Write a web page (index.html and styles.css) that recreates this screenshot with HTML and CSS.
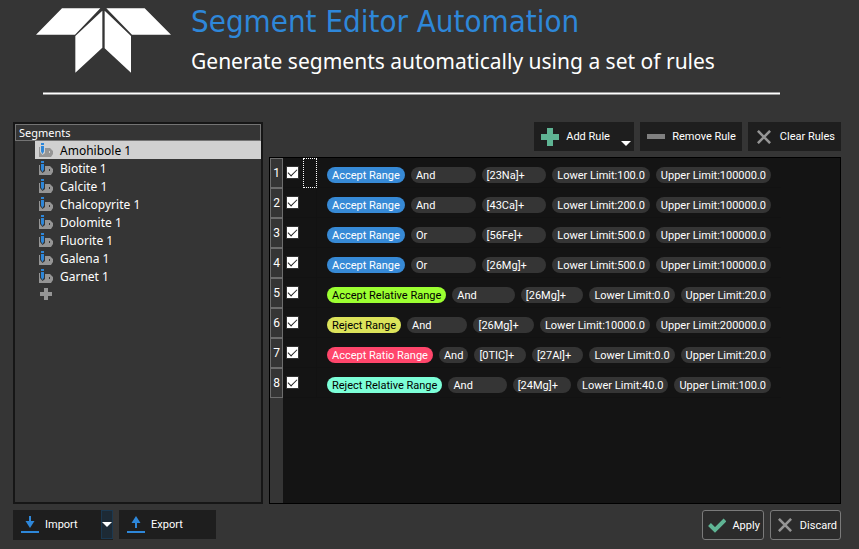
FILE: index.html
```html
<!DOCTYPE html>
<html lang="en">
<head>
  <meta charset="UTF-8" />
  <meta name="viewport" content="width=device-width, initial-scale=1.0"/>
  <title>Segment Editor Automation</title>
  <link rel="stylesheet" href="styles.css">
</head>
<body>
  <!-- shared icons -->
  <svg class="sprite" aria-hidden="true">
    <symbol id="icon-segment" viewBox="0 0 14 14">
      <path class="tag" d="M0 4h1v5l2.500 3L6 10V5h5l3 3v3l-2 3H0zM10 8v2h1V8z"/>
      <path class="pen" d="M2 0h3v2H2zM2 3h3v5.500L3.500 11 2 8.500z"/>
    </symbol>
    <symbol id="icon-plus" viewBox="0 0 18 18">
      <path d="M6 0h6v6h6v6h-6v6H6v-6H0V6h6z"/>
    </symbol>
    <symbol id="icon-cross" viewBox="0 0 16 16">
      <path d="M1 1l14 14M15 1L1 15" fill="none" stroke="#959595" stroke-width="3"/>
    </symbol>
  </svg>

  <header class="header">
    <div class="brand">
      <svg class="logo" viewBox="109 24 405 195" role="img" aria-label="Logo">
        <path d="M187 25H302L226 104H109zM320 25H435L514 104H397zM308 32V143L227 218V108zM315 32V145L394 218V108z" fill="#fff"/>
      </svg>
      <div class="titles">
        <h1>Segment Editor Automation</h1>
        <p>Generate segments automatically using a set of rules</p>
      </div>
    </div>
    <hr class="rule-line">
  </header>

  <main class="editor">
    <section class="segments">
      <h2>Segments</h2>
      <ul class="segment-list">
        <li class="selected"><svg><use href="#icon-segment"/></svg>Amohibole 1</li>
        <li><svg><use href="#icon-segment"/></svg>Biotite 1</li>
        <li><svg><use href="#icon-segment"/></svg>Calcite 1</li>
        <li><svg><use href="#icon-segment"/></svg>Chalcopyrite 1</li>
        <li><svg><use href="#icon-segment"/></svg>Dolomite 1</li>
        <li><svg><use href="#icon-segment"/></svg>Fluorite 1</li>
        <li><svg><use href="#icon-segment"/></svg>Galena 1</li>
        <li><svg><use href="#icon-segment"/></svg>Garnet 1</li>
        <li><button class="add-segment" aria-label="Add segment"><svg><use href="#icon-plus"/></svg></button></li>
      </ul>
    </section>

    <section class="rules">
      <div class="toolbar">
        <button class="btn add-rule">
          <svg class="icon green"><use href="#icon-plus"/></svg>Add Rule
          <span class="arrow"></span>
        </button>
        <button class="btn">
          <svg class="icon" viewBox="0 0 18 18"><path d="M0 6h18v5H0z" fill="#808080"/></svg>Remove Rule
        </button>
        <button class="btn">
          <svg class="icon small"><use href="#icon-cross"/></svg>Clear Rules
        </button>
      </div>

      <div class="table-frame">
        <table class="rule-table">
          <colgroup>
            <col class="col-number"><col class="col-check"><col class="col-spacer"><col>
          </colgroup>
          <tr>
            <th scope="row">1</th>
            <td class="check"><input type="checkbox" aria-label="Rule 1" checked></td>
            <td class="spacer focused"></td>
            <td><div class="pills">
              <span class="pill blue">Accept Range</span><span class="pill grow">And</span><span class="pill grow">[23Na]+</span><span class="pill">Lower Limit:100.0</span><span class="pill">Upper Limit:100000.0</span>
            </div></td>
          </tr>
          <tr>
            <th scope="row">2</th>
            <td class="check"><input type="checkbox" aria-label="Rule 2" checked></td>
            <td class="spacer"></td>
            <td><div class="pills">
              <span class="pill blue">Accept Range</span><span class="pill grow">And</span><span class="pill grow">[43Ca]+</span><span class="pill">Lower Limit:200.0</span><span class="pill">Upper Limit:100000.0</span>
            </div></td>
          </tr>
          <tr>
            <th scope="row">3</th>
            <td class="check"><input type="checkbox" aria-label="Rule 3" checked></td>
            <td class="spacer"></td>
            <td><div class="pills">
              <span class="pill blue">Accept Range</span><span class="pill grow">Or</span><span class="pill grow">[56Fe]+</span><span class="pill">Lower Limit:500.0</span><span class="pill">Upper Limit:100000.0</span>
            </div></td>
          </tr>
          <tr>
            <th scope="row">4</th>
            <td class="check"><input type="checkbox" aria-label="Rule 4" checked></td>
            <td class="spacer"></td>
            <td><div class="pills">
              <span class="pill blue">Accept Range</span><span class="pill grow">Or</span><span class="pill grow">[26Mg]+</span><span class="pill">Lower Limit:500.0</span><span class="pill">Upper Limit:100000.0</span>
            </div></td>
          </tr>
          <tr>
            <th scope="row">5</th>
            <td class="check"><input type="checkbox" aria-label="Rule 5" checked></td>
            <td class="spacer"></td>
            <td><div class="pills">
              <span class="pill lime">Accept Relative Range</span><span class="pill grow">And</span><span class="pill grow">[26Mg]+</span><span class="pill">Lower Limit:0.0</span><span class="pill">Upper Limit:20.0</span>
            </div></td>
          </tr>
          <tr>
            <th scope="row">6</th>
            <td class="check"><input type="checkbox" aria-label="Rule 6" checked></td>
            <td class="spacer"></td>
            <td><div class="pills">
              <span class="pill yellow">Reject Range</span><span class="pill grow">And</span><span class="pill grow">[26Mg]+</span><span class="pill">Lower Limit:10000.0</span><span class="pill">Upper Limit:200000.0</span>
            </div></td>
          </tr>
          <tr>
            <th scope="row">7</th>
            <td class="check"><input type="checkbox" aria-label="Rule 7" checked></td>
            <td class="spacer"></td>
            <td><div class="pills">
              <span class="pill red">Accept Ratio Range</span><span class="pill">And</span><span class="pill grow">[0TIC]+</span><span class="pill grow">[27Al]+</span><span class="pill">Lower Limit:0.0</span><span class="pill">Upper Limit:20.0</span>
            </div></td>
          </tr>
          <tr>
            <th scope="row">8</th>
            <td class="check"><input type="checkbox" aria-label="Rule 8" checked></td>
            <td class="spacer"></td>
            <td><div class="pills">
              <span class="pill aqua">Reject Relative Range</span><span class="pill grow">And</span><span class="pill grow">[24Mg]+</span><span class="pill">Lower Limit:40.0</span><span class="pill">Upper Limit:100.0</span>
            </div></td>
          </tr>
        </table>
      </div>
    </section>
  </main>

  <footer class="footer">
    <div class="split">
      <button class="btn file-btn">
        <svg class="icon" viewBox="0 0 18 18"><path d="M8 0h2v5h3.500L9 12 4.500 5H8zM0 15h18v2H0z" fill="#2e87d9"/></svg>Import
      </button>
      <button class="split-arrow" aria-label="Import options"><span class="arrow"></span></button>
    </div>
    <button class="btn file-btn">
      <svg class="icon" viewBox="0 0 18 18"><path d="M8 12h2V7h3.500L9 0 4.500 7H8zM0 15h18v2H0z" fill="#2e87d9"/></svg>Export
    </button>
    <button class="btn outlined first">
      <svg class="icon" viewBox="0 0 18 18"><path d="M1.500 8.500l5.500 5.500L17 4" fill="none" stroke="#5fb494" stroke-width="4"/></svg>Apply
    </button>
    <button class="btn outlined">
      <svg class="icon small"><use href="#icon-cross"/></svg>Discard
    </button>
  </footer>
</body>
</html>
```
FILE: styles.css
```css
* {
  box-sizing: border-box;
}

body {
  margin: 0;
  min-height: 100vh;
  display: flex;
  flex-direction: column;
  background: #353535;
  color: #fff;
  font-family: Roboto, sans-serif;
  font-size: 11px;
}

.sprite {
  display: none;
}

.header {
  height: 122px;
  padding: 0 79px 0 36px;
}

.brand {
  display: flex;
  gap: 20px;
}

.logo {
  flex: none;
  width: 135px;
  height: 65px;
  margin-top: 8px;
}

.titles {
  white-space: nowrap;
}

h1 {
  margin: 0;
  font-family: "DejaVu Sans Condensed", "DejaVu Sans", sans-serif;
  font-size: 31px;
  line-height: 42px;
  font-weight: normal;
  color: #2e87d9;
}

.titles p {
  margin: 0;
  font-family: "Noto Sans", sans-serif;
  font-size: 21px;
  line-height: 38px;
}

.rule-line {
  height: 3px;
  margin: 12px 0 0 7px;
  border: 1px solid #9a9a9a;
  border-width: 1px 0;
  background: #fff;
}

.editor {
  flex: 1;
  display: flex;
  gap: 6px;
  padding: 0 18px 0 13px;
}

.segments {
  flex: none;
  width: 250px;
  border: 2px solid #161616;
  font-family: "Noto Sans", sans-serif;
  font-size: 12px;
}

.segments h2 {
  margin: 0;
  padding-left: 3px;
  border: 1px solid #747474;
  font-size: 11px;
  line-height: 15px;
  font-weight: normal;
}

.segment-list {
  margin: 0;
  padding: 0 0 0 20px;
  list-style: none;
}

.segment-list li {
  display: flex;
  align-items: center;
  gap: 7px;
  height: 18px;
  padding-left: 4px;
}

.segment-list svg {
  width: 14px;
  height: 14px;
}

.segment-list .selected {
  background: #d0d0d0;
  color: #000;
}

.tag {
  fill: #959595;
  fill-rule: evenodd;
}

.selected .tag {
  fill: #6f93b0;
}

.pen {
  fill: #2e87d9;
}

.add-segment {
  padding: 0;
  border: 0;
  background: none;
  display: flex;
}

.add-segment svg {
  width: 12px;
  height: 12px;
  margin: 0 1px;
  fill: #959595;
}

.rules {
  flex: 1;
  min-width: 0;
  display: flex;
  flex-direction: column;
  gap: 6px;
}

.toolbar {
  display: flex;
  justify-content: flex-end;
  gap: 6px;
}

.btn {
  position: relative;
  height: 29px;
  display: flex;
  align-items: center;
  gap: 7px;
  padding: 0 6px 0 7px;
  border: 0;
  background: #1e1e1e;
  color: #fff;
  font: inherit;
  white-space: nowrap;
}

.icon {
  flex: none;
  width: 18px;
  height: 18px;
}

.icon.small {
  width: 14px;
  height: 14px;
  margin: 0 2px;
}

.icon.green {
  fill: #5fb494;
}

.add-rule {
  width: 100px;
}

.arrow {
  border: 5px solid transparent;
  border-top-color: #fff;
  border-bottom: 0;
}

.add-rule .arrow {
  position: absolute;
  right: 3px;
  bottom: 5px;
}

.table-frame {
  flex: 1;
  border: 1px solid #000;
  background: linear-gradient(to right, #353535 13px, #141414 13px);
}

.rule-table {
  width: 511px;
  table-layout: fixed;
  border-collapse: separate;
  border-spacing: 0;
}

.col-number {
  width: 13px;
}

.col-check {
  width: 20px;
}

.col-spacer {
  width: 14px;
}

.rule-table th,
.rule-table td {
  height: 30px;
  padding: 0;
}

.rule-table td {
  border-bottom: 1px solid #121212;
}

.rule-table th {
  border: 1px solid #6c6c6c;
  background: #353535;
  font-size: 12px;
  font-weight: normal;
}

.check input {
  appearance: none;
  display: block;
  width: 13px;
  height: 13px;
  margin: 0 3px;
  border: 1px solid #333;
  background: #fff;
}

.check input:checked::before {
  content: "";
  display: block;
  width: 8px;
  height: 4px;
  margin: 2px 1px;
  border: solid #222;
  border-width: 0 0 1px 1px;
  transform: rotate(-45deg);
}

.spacer {
  border-right: 1px solid #121212;
}

.rule-table .focused {
  border: 1px dotted #fff;
}

.pills {
  display: flex;
  gap: 6px;
  padding: 4px 10px 0;
}

.pill {
  height: 16px;
  padding: 0 5px;
  border-radius: 8px;
  background: #353535;
  line-height: 17px;
  white-space: nowrap;
}

.grow {
  flex: 1 1 0;
}

.blue {
  background: #378ad6;
}

.lime {
  background: #9cff31;
  color: #000;
}

.yellow {
  background: #dce35a;
  color: #000;
}

.red {
  background: #ff466b;
}

.aqua {
  background: #7cffd8;
  color: #000;
}

.footer {
  display: flex;
  gap: 6px;
  padding: 6px 18px 9px 13px;
}

.split {
  display: flex;
  background: #1e1e1e;
}

.file-btn {
  width: 97px;
  padding-left: 8px;
  gap: 6px;
}

.split .file-btn {
  width: 88px;
}

.split-arrow {
  width: 12px;
  height: 29px;
  padding: 0;
  border: 1px solid #1b3850;
  background: #1d2a35;
  display: flex;
  align-items: center;
  justify-content: center;
}

.outlined {
  height: 30px;
  border: 1px solid #7a7a7a;
  border-radius: 3px;
  background: #2b2b2b;
  gap: 6px;
  padding: 0 3px 0 5px;
}

.first {
  margin-left: auto;
}
```
